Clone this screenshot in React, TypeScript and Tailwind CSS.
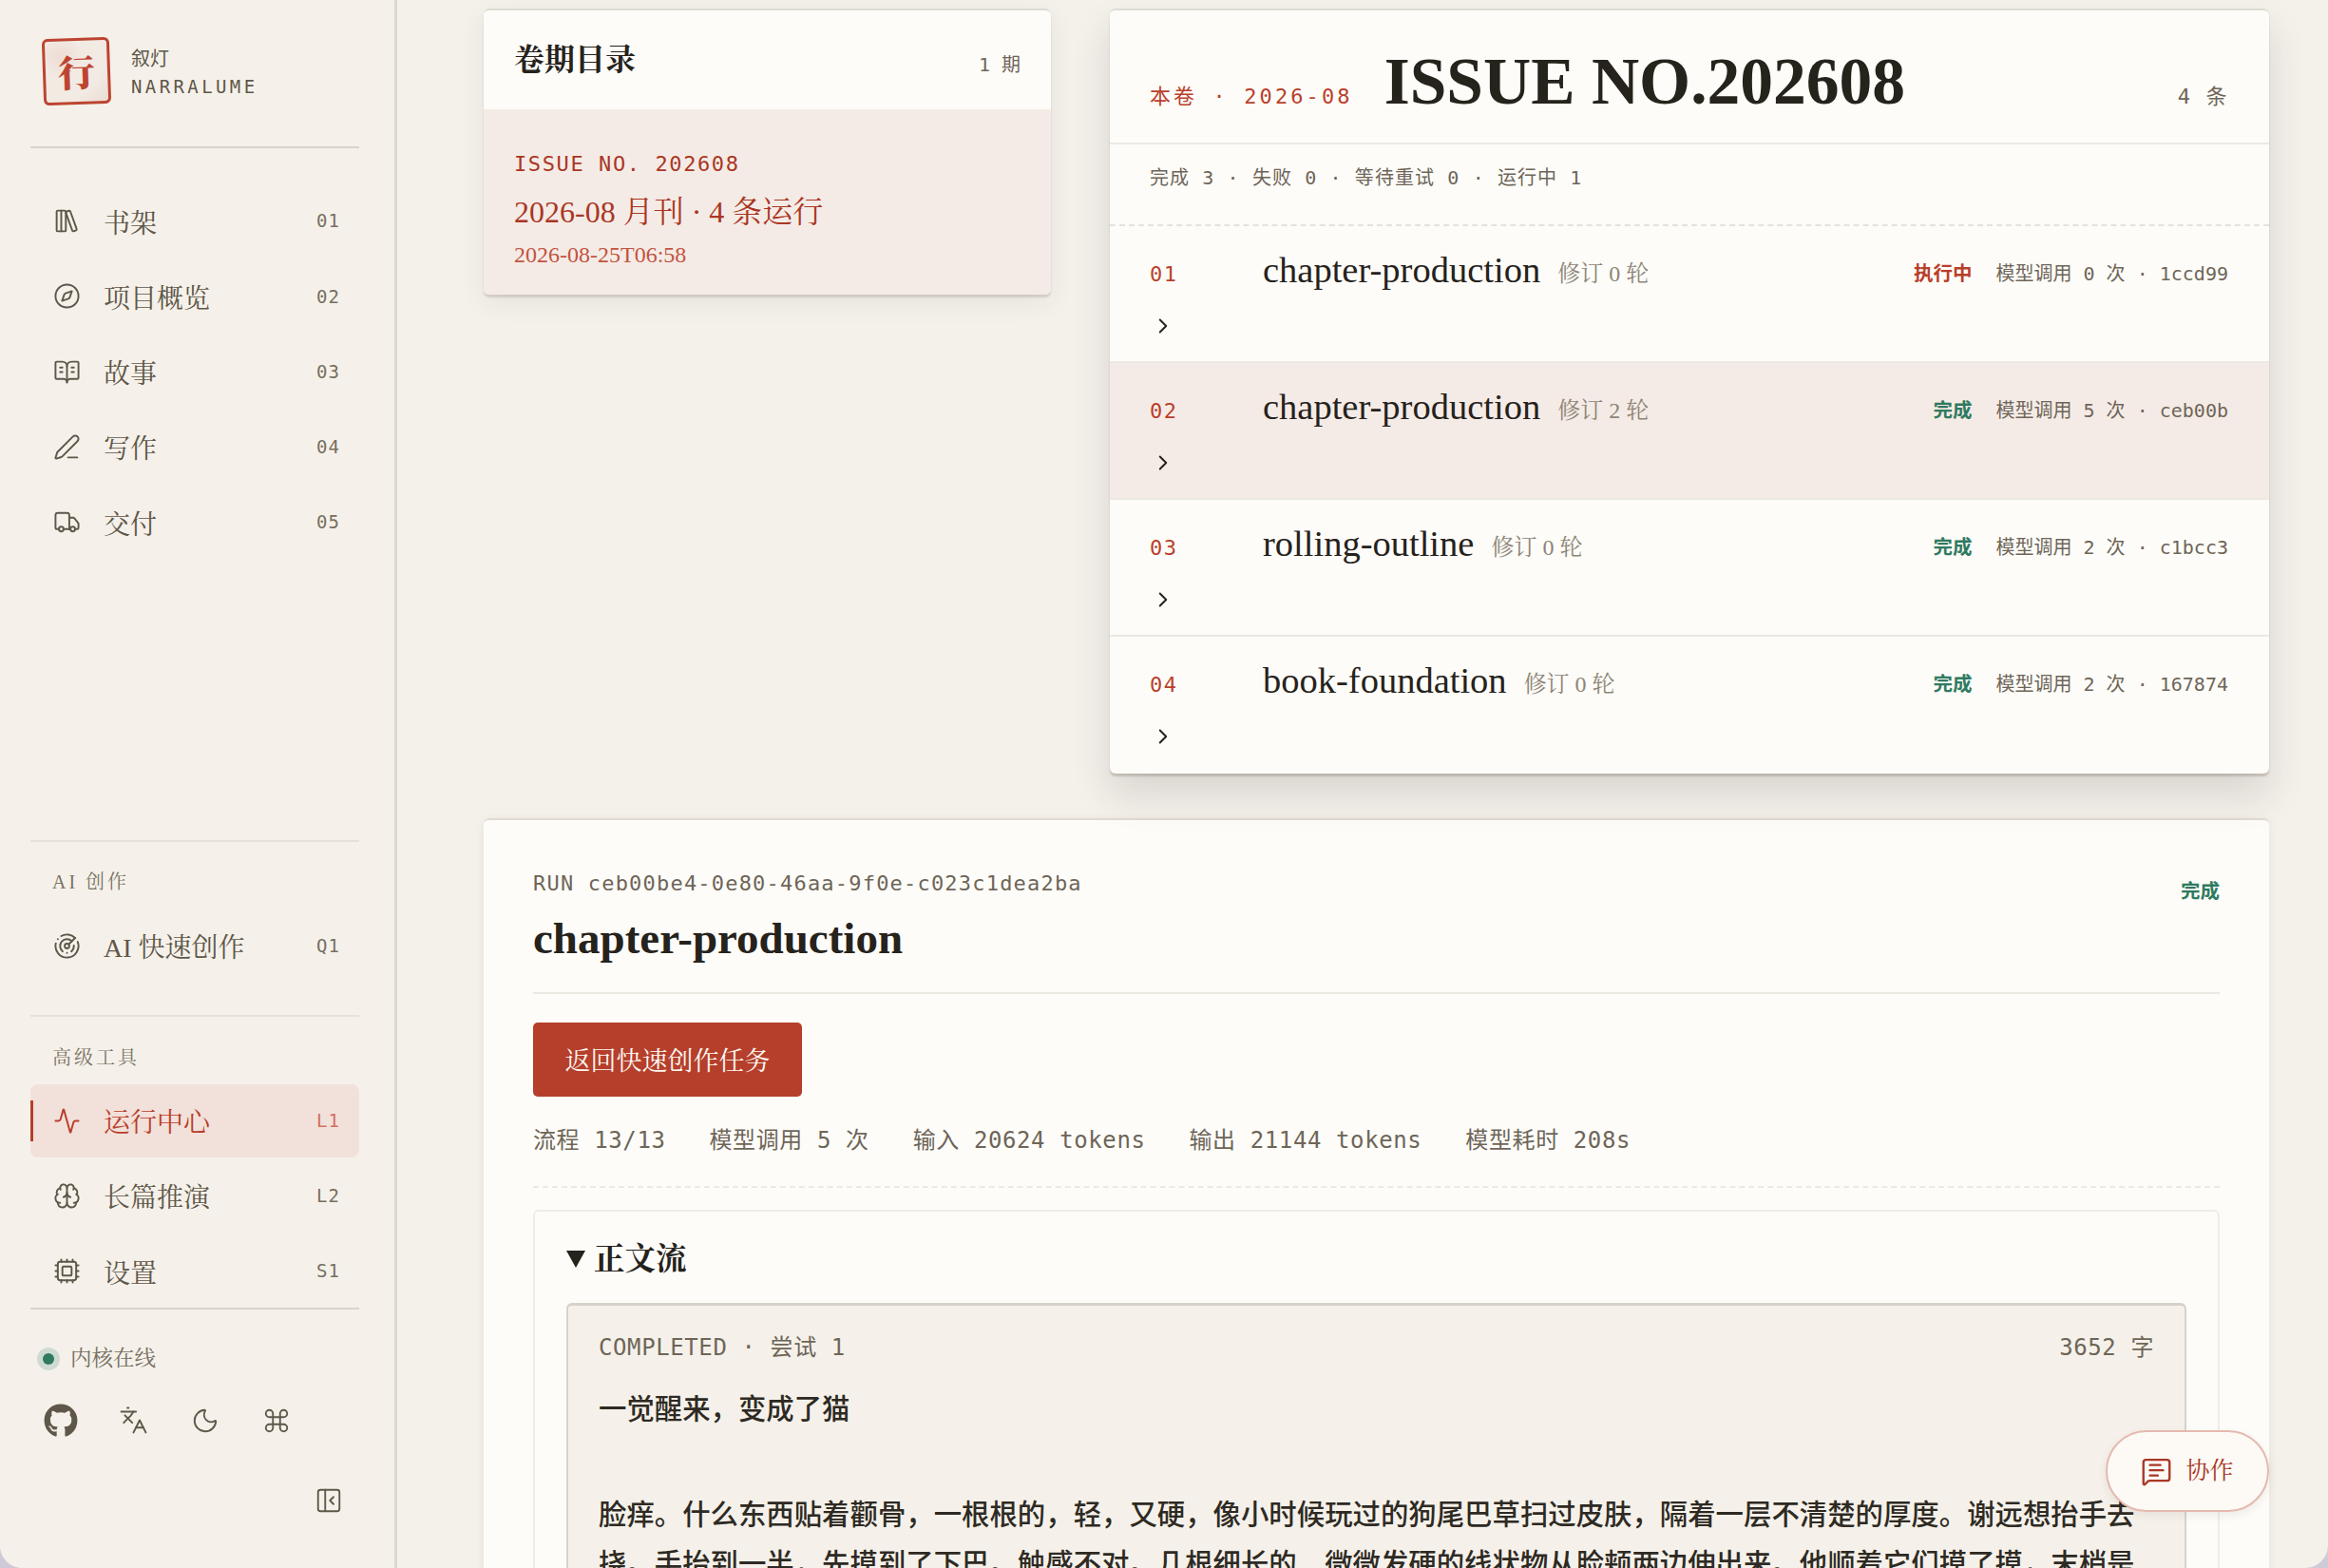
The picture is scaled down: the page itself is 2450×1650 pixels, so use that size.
import {
  Activity,
  BookOpenText,
  Brain,
  ChevronRight,
  Command,
  Compass,
  Cpu,
  Languages,
  LibraryBig,
  MessageSquareText,
  Moon,
  PanelLeftClose,
  PenLine,
  Radar,
  Truck,
} from 'lucide-react'
import { FaGithub } from 'react-icons/fa'

const serif = "font-['Liberation_Serif','Noto_Serif_CJK_SC','Noto_Sans_CJK_SC',serif]"
const mono = "font-['DejaVu_Sans_Mono','Noto_Sans_CJK_SC',monospace]"

const mainNav = [
  { icon: LibraryBig, label: '书架', code: '01' },
  { icon: Compass, label: '项目概览', code: '02' },
  { icon: BookOpenText, label: '故事', code: '03' },
  { icon: PenLine, label: '写作', code: '04' },
  { icon: Truck, label: '交付', code: '05' },
]

const toolNav = [
  { icon: Activity, label: '运行中心', code: 'L1', active: true },
  { icon: Brain, label: '长篇推演', code: 'L2' },
  { icon: Cpu, label: '设置', code: 'S1' },
]

const runs = [
  { no: '01', name: 'chapter-production', rev: '修订 0 轮', status: '执行中', calls: 0, hash: '1ccd99' },
  { no: '02', name: 'chapter-production', rev: '修订 2 轮', status: '完成', calls: 5, hash: 'ceb00b', selected: true },
  { no: '03', name: 'rolling-outline', rev: '修订 0 轮', status: '完成', calls: 2, hash: 'c1bcc3' },
  { no: '04', name: 'book-foundation', rev: '修订 0 轮', status: '完成', calls: 2, hash: '167874' },
]

function NavItem({ icon: Icon, label, code, active }: { icon: typeof Compass; label: string; code: string; active?: boolean }) {
  return (
    <a
      className={`relative flex h-[77px] items-center rounded-[8px] pl-6 pr-5 ${
        active ? 'bg-[#f2e1da] text-[#b93f2b]' : 'text-[#5f5749]'
      }`}
    >
      {active && <span className="absolute left-0 top-[17px] h-[43px] w-[3px] bg-[#b93f2b]" />}
      <Icon size={29} strokeWidth={1.6} className="shrink-0" />
      <span className={`ml-[24px] flex-1 pt-[6px] text-[28px] ${serif}`}>{label}</span>
      <span className={`text-[19px] tracking-[1px] ${mono} ${active ? 'text-[#d0705f]' : 'text-[#776f61]'}`}>{code}</span>
    </a>
  )
}

function Sidebar() {
  return (
    <aside className="flex h-full w-[418px] shrink-0 flex-col border-r-[3px] border-[#dcd7cf] bg-[#f5f1ea] pl-8 pr-[37px]">
      <div className="flex h-[156px] items-center gap-[22px] border-b-2 border-[#d9d4cb] pb-[4px] pl-[13px]">
        <div className="flex h-[70px] w-[71px] -rotate-2 items-center justify-center rounded-[6px] border-[3px] border-[#bd4431] bg-[radial-gradient(circle_at_25%_25%,#eedcd4_0%,#f2ebe4_35%,#f2ebe4_65%,#ecdcd3_100%)] pt-[4px]">
          <span className={`text-[39px] font-black leading-none text-[#bd4431] ${serif}`}>行</span>
        </div>
        <div className="pt-[2px] text-[#5f5749]">
          <div className="text-[20px] leading-[30px] font-['Noto_Sans_CJK_SC',sans-serif]">叙灯</div>
          <div className={`text-[19px] leading-[30px] tracking-[3.4px] ${mono}`}>NARRALUME</div>
        </div>
      </div>

      <nav className="mt-[38px] flex flex-col gap-[2.25px]">
        {mainNav.map((item) => (
          <NavItem key={item.code} {...item} />
        ))}
      </nav>

      <div className="mt-auto border-t-2 border-[#e6e1d9]">
        <div className={`pl-[23px] pt-[28px] text-[20px] leading-[28px] tracking-[3px] text-[#7a7264] ${serif}`}>AI 创作</div>
        <div className="mt-[15px]">
          <NavItem icon={Radar} label="AI 快速创作" code="Q1" />
        </div>
      </div>

      <div className="mt-[34px] border-t-2 border-[#e6e1d9]">
        <div className={`pl-[23px] pt-[29px] text-[20px] leading-[28px] tracking-[3px] text-[#7a7264] ${serif}`}>高级工具</div>
        <nav className="mt-[14px] flex flex-col gap-[2.25px]">
          {toolNav.map((item) => (
            <NavItem key={item.code} {...item} />
          ))}
        </nav>
      </div>

      <div className="h-[274px] border-t-2 border-[#d9d4cb]">
        <div className="mt-[35px] flex items-center pl-[7px]">
          <span className="flex h-[24px] w-[24px] items-center justify-center rounded-full bg-[#cfdbd2]">
            <span className="h-[12px] w-[12px] rounded-full bg-[#2f7a60]" />
          </span>
          <span className={`ml-[11px] text-[22.5px] text-[#776f61] ${serif}`}>内核在线</span>
        </div>
        <div className="mt-[30px] flex items-center text-[#5f5749]">
          <FaGithub size={36} className="ml-[14px]" />
          <Languages size={31} strokeWidth={1.5} className="ml-[43px]" />
          <Moon size={30} strokeWidth={1.5} className="ml-[45px]" />
          <Command size={30} strokeWidth={1.5} className="ml-[45px]" />
        </div>
        <div className="mt-[51px] flex justify-end pr-[17px] text-[#5f5749]">
          <PanelLeftClose size={30} strokeWidth={1.5} />
        </div>
      </div>
    </aside>
  )
}

function IssueList() {
  return (
    <section className="w-[597px] overflow-hidden rounded-[6px] border-t-2 border-[#dedbd4] bg-[#fdfcf8] shadow-[0_3px_2px_rgba(60,50,40,0.15),0_8px_28px_rgba(60,50,40,0.07)]">
      <div className="flex h-[104px] items-center justify-between px-8">
        <h2 className={`text-[32px] font-bold text-[#26221c] ${serif}`}>卷期目录</h2>
        <span className={`mt-[10px] text-[20px] text-[#6e6558] ${mono}`}>1 期</span>
      </div>
      <div className="h-[195px] bg-[#f5ebe6] px-8 pt-[43px] text-[#a93724]">
        <div className={`text-[22px] leading-[30px] tracking-[1.6px] ${mono}`}>ISSUE NO. 202608</div>
        <div className={`mt-[14px] text-[32px] leading-[42px] ${serif}`}>2026-08 月刊 · 4 条运行</div>
        <div className={`mt-[9px] text-[24px] leading-[30px] text-[#c25440] ${serif}`}>2026-08-25T06:58</div>
      </div>
    </section>
  )
}

function RunList() {
  return (
    <section className="w-[1220px] overflow-hidden rounded-[6px] border-t-2 border-[#dedbd4] bg-[#fdfcf8] shadow-[0_3px_2px_rgba(60,50,40,0.2),0_22px_40px_rgba(60,50,40,0.14)]">
      <div className="flex h-[141px] items-center border-b-2 border-[#ece9e3] pl-[42px] pr-[43px]">
        <span className={`mt-[42px] text-[22px] tracking-[3.1px] text-[#b93f2b] ${mono}`}>本卷 · 2026-08</span>
        <h1 className={`ml-[33px] mt-[11px] flex-1 text-[69.5px] font-bold leading-none text-[#26221c] ${serif}`}>ISSUE NO.202608</h1>
        <span className={`mt-[42px] text-[22px] tracking-[1.6px] text-[#6e6558] ${mono}`}>4 条</span>
      </div>
      <div className={`flex h-[86px] items-start border-b-2 border-dashed border-[#e6e2db] pl-[42px] pt-[20px] text-[20px] tracking-[1.1px] text-[#6e6558] ${mono}`}>
        完成 3 · 失败 0 · 等待重试 0 · 运行中 1
      </div>
      {runs.map((run) => (
        <div
          key={run.no}
          className={`flex h-[144px] flex-col border-b-2 border-[#ece9e3] pl-[42px] pr-[43px] last:border-b-0 ${run.selected ? 'bg-[#f5ebe6]' : ''}`}
        >
          <div className="mt-[27px] flex items-center">
            <span className={`w-[119px] text-[22px] tracking-[1.5px] text-[#b93f2b] ${mono}`}>{run.no}</span>
            <span className={`-translate-y-[4px] text-[38.5px] leading-[46px] text-[#26221c] ${serif}`}>{run.name}</span>
            <span className={`ml-[18px] flex-1 text-[24px] text-[#8d8577] ${serif}`}>{run.rev}</span>
            <span className={`text-[20.5px] font-bold ${mono} ${run.status === '完成' ? 'text-[#2f7a60]' : 'text-[#b93f2b]'}`}>{run.status}</span>
            <span className={`ml-[25px] text-[20px] text-[#6e6558] ${mono}`}>
              模型调用 {run.calls} 次 · {run.hash}
            </span>
          </div>
          <ChevronRight size={26} strokeWidth={1.8} className="ml-[1px] mt-[19px] text-[#26221c]" />
        </div>
      ))}
    </section>
  )
}

function RunDetail() {
  const stats = ['流程 13/13', '模型调用 5 次', '输入 20624 tokens', '输出 21144 tokens', '模型耗时 208s']
  return (
    <section className="mt-[47px] rounded-t-[6px] border-t-2 border-[#dedbd4] bg-[#fdfcf8] px-[52px] shadow-[0_2px_12px_rgba(60,50,40,0.06)]">
      <div className="flex justify-between border-b-2 border-[#ece9e3] pt-[52px] pb-[29px]">
        <div>
          <div className={`text-[22px] leading-[30px] tracking-[1.2px] text-[#6e6558] ${mono}`}>RUN ceb00be4-0e80-46aa-9f0e-c023c1dea2ba</div>
          <h2 className={`mt-[14px] text-[47px] font-bold leading-[56px] text-[#26221c] ${serif}`}>chapter-production</h2>
        </div>
        <span className={`mt-[8px] text-[20.5px] font-bold text-[#2f7a60] ${mono}`}>完成</span>
      </div>

      <button className={`mt-[30px] flex h-[78px] w-[283px] items-center justify-center rounded-[5px] bg-[#b53f2b] pt-[4px] text-[27px] text-[#fdf8f2] ${serif}`}>
        返回快速创作任务
      </button>

      <div className={`mt-[28px] flex h-[36px] items-center gap-[46px] text-[24px] tracking-[0.6px] text-[#6e6558] ${mono}`}>
        {stats.map((s) => (
          <span key={s}>{s}</span>
        ))}
      </div>

      <div className="mt-[30px] border-t-2 border-dashed border-[#ece9e3] pt-[23px]">
        <div className="rounded-[6px] border-2 border-[#efece6] px-[33px] pb-10">
          <h3 className={`flex items-center gap-[9px] pt-[28px] text-[32.5px] font-bold leading-[44px] text-[#26221c] ${serif}`}>
            <svg width="20" height="18" viewBox="0 0 20 18" className="shrink-0 fill-current">
              <path d="M0 0h20L10 18z" />
            </svg>
            正文流
          </h3>
          <div className="mt-[24px] rounded-[6px] border-2 border-t-[3px] border-[#d6d2ca] border-b-0 bg-[#f5f1ea] px-[32px] pt-[28px]">
            <div className={`flex justify-between text-[24px] leading-[32px] tracking-[0.6px] text-[#6e6558] ${mono}`}>
              <span>COMPLETED · 尝试 1</span>
              <span>3652 字</span>
            </div>
            <div className="mt-[20px] text-[29.4px] font-medium leading-[52px] text-[#2e2a23] font-['Noto_Sans_CJK_SC',sans-serif]">
              <p>一觉醒来，变成了猫</p>
              <p className="mt-[59px]">
                脸痒。什么东西贴着颧骨，一根根的，轻，又硬，像小时候玩过的狗尾巴草扫过皮肤，隔着一层不清楚的厚度。谢远想抬手去挠。手抬到一半，先摸到了下巴。触感不对。几根细长的、微微发硬的线状物从脸颊两边伸出来。他顺着它们摸了摸，末梢是
              </p>
            </div>
          </div>
        </div>
      </div>
    </section>
  )
}

export default function App() {
  return (
    <div className="relative h-[1650px] w-[2450px] overflow-hidden bg-[#cfcbd6]">
      <div className="flex h-full overflow-hidden rounded-b-[24px] bg-[#f4f0ea]">
        <Sidebar />
        <main className="min-w-0 flex-1 overflow-hidden pl-[91px] pr-[62px] pt-[9px]">
          <div className="flex items-start gap-[62px]">
            <IssueList />
            <RunList />
          </div>
          <RunDetail />
        </main>
      </div>
      <button className={`absolute left-[2216px] top-[1505px] flex h-[86px] w-[172px] items-center justify-center gap-[14px] rounded-[43px] border-2 border-[#e6b9af] bg-[#fdfaf6] text-[25px] text-[#a93724] shadow-[0_4px_10px_rgba(60,50,40,0.08)] ${serif}`}>
        <MessageSquareText size={33} strokeWidth={1.7} />
        协作
      </button>
    </div>
  )
}
